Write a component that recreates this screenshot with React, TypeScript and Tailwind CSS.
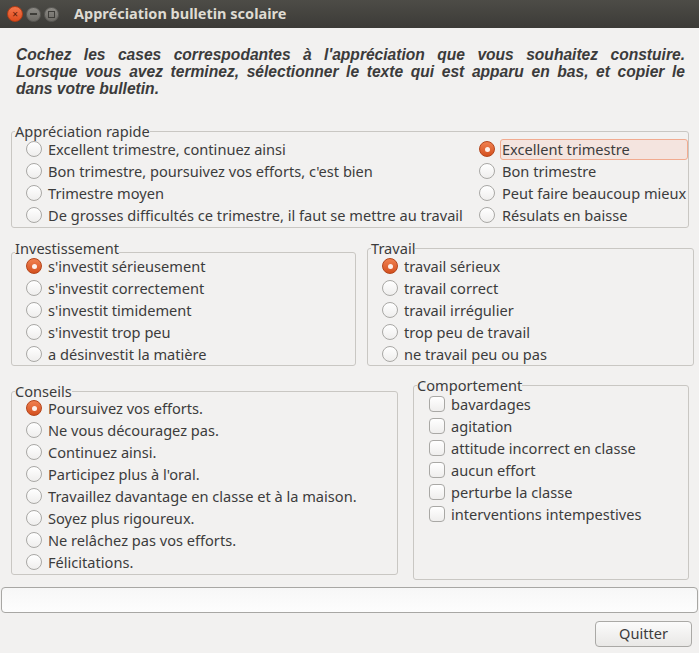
import React from "react";

const ui = "font-['Noto_Sans','Lato',sans-serif] text-[14.6px] text-[#3c3c3c]";

function Radio({ checked }: { checked?: boolean }) {
  if (checked) {
    return (
      <span className="flex h-[16px] w-[16px] shrink-0 items-center justify-center rounded-full border border-[#b4441a] bg-linear-to-b from-[#f0804f] to-[#d4501d]">
        <span className="h-[5px] w-[5px] rounded-full bg-[#fdf1ec]" />
      </span>
    );
  }
  return (
    <span className="h-[16px] w-[16px] shrink-0 rounded-full border border-[#a9a8a5] bg-linear-to-b from-[#ffffff] to-[#efeeed]" />
  );
}

function RadioRow({ label, checked }: { label: string; checked?: boolean }) {
  return (
    <div className="flex h-[22px] items-center gap-[6px] whitespace-nowrap">
      <Radio checked={checked} />
      <span className="leading-[16px]">{label}</span>
    </div>
  );
}

function CheckRow({ label }: { label: string }) {
  return (
    <div className="flex h-[22px] items-center gap-[6px] whitespace-nowrap">
      <span className="h-[16px] w-[16px] shrink-0 rounded-[4px] border border-[#a9a8a5] bg-linear-to-b from-[#ffffff] to-[#efeeed]" />
      <span className="leading-[16px]">{label}</span>
    </div>
  );
}

function GroupBox({
  title,
  className,
  titleClassName,
  children,
}: {
  title: string;
  className?: string;
  titleClassName?: string;
  children: React.ReactNode;
}) {
  return (
    <div className={"shrink-0 rounded-[3px] border border-[#c9c7c3] " + (className ?? "")}>
      <div className={"ml-[3px] w-fit bg-[#f2f1f0] leading-[12px] " + (titleClassName ?? "-mt-[7px]")}>
        {title}
      </div>
      {children}
    </div>
  );
}

export default function App() {
  const rapideLeft = [
    "Excellent trimestre, continuez ainsi",
    "Bon trimestre, poursuivez vos efforts, c'est bien",
    "Trimestre moyen",
    "De grosses difficultés ce trimestre, il faut se mettre au travail",
  ];
  const rapideRight = [
    "Excellent trimestre",
    "Bon trimestre",
    "Peut faire beaucoup mieux",
    "Résulats en baisse",
  ];
  const investissement = [
    "s'investit sérieusement",
    "s'investit correctement",
    "s'investit timidement",
    "s'investit trop peu",
    "a désinvestit la matière",
  ];
  const travail = [
    "travail sérieux",
    "travail correct",
    "travail irrégulier",
    "trop peu de travail",
    "ne travail peu ou pas",
  ];
  const conseils = [
    "Poursuivez vos efforts.",
    "Ne vous découragez pas.",
    "Continuez ainsi.",
    "Participez plus à l'oral.",
    "Travaillez davantage en classe et à la maison.",
    "Soyez plus rigoureux.",
    "Ne relâchez pas vos efforts.",
    "Félicitations.",
  ];
  const comportement = [
    "bavardages",
    "agitation",
    "attitude incorrect en classe",
    "aucun effort",
    "perturbe la classe",
    "interventions intempestives",
  ];

  return (
    <div className="flex h-[653px] w-[699px] flex-col overflow-hidden bg-[#f2f1f0]">
      {/* Title bar */}
      <div className="flex h-[28px] shrink-0 items-center bg-linear-to-b from-[#4d4c47] to-[#3c3b37] pl-[7px]">
        <span className="flex h-[16px] w-[16px] items-center justify-center rounded-full border border-[#b33d16] bg-linear-to-b from-[#f4764a] to-[#df4c1c] text-[10px] leading-none text-[#5b1c08]">
          ×
        </span>
        <span className="ml-[3px] flex h-[15px] w-[15px] items-center justify-center rounded-full border border-[#5c5b57] bg-linear-to-b from-[#8c8a85] to-[#6d6b66]">
          <span className="h-[2px] w-[7px] bg-[#3e3d39]" />
        </span>
        <span className="ml-[3px] flex h-[15px] w-[15px] items-center justify-center rounded-full border border-[#5c5b57] bg-linear-to-b from-[#8c8a85] to-[#6d6b66]">
          <span className="h-[7px] w-[7px] border-[1.5px] border-[#3e3d39]" />
        </span>
        <span className="ml-[15px] font-['Noto_Sans','Lato',sans-serif] text-[14.5px] font-bold text-[#dfdbd2]">
          Appréciation bulletin scolaire
        </span>
      </div>

      {/* Instructions */}
      <div className="mt-[18px] mr-[14px] ml-[16px] font-['Liberation_Sans',Arial,sans-serif] text-[15.6px] leading-[17px] font-bold text-[#3b3b3b] italic">
        <p className="text-justify [text-align-last:justify]">
          Cochez les cases correspodantes à l'appréciation que vous souhaitez constuire.
        </p>
        <p className="text-justify [text-align-last:justify]">
          Lorsque vous avez terminez, sélectionner le texte qui est apparu en bas, et copier le
        </p>
        <p>dans votre bulletin.</p>
      </div>

      <div className={"flex flex-col pl-[11px] " + ui}>
        {/* Appréciation rapide */}
        <GroupBox title="Appréciation rapide" className="mt-[34px] w-[678px]">
          <div className="mt-px grid grid-cols-[453px_1fr] pb-px pl-[14px]">
            <div className="flex flex-col">
              {rapideLeft.map((l) => (
                <RadioRow key={l} label={l} />
              ))}
            </div>
            <div className="flex flex-col">
              {rapideRight.map((l, i) => (
                <div key={l} className="flex h-[22px] items-center whitespace-nowrap">
                  <Radio checked={i === 0} />
                  <span
                    className={
                      "ml-[5px] flex h-[21px] flex-1 items-center rounded-[3px] border pl-px leading-[16px] " +
                      (i === 0 ? "border-[#f1ab90] bg-[#f4e4df]" : "border-transparent")
                    }
                  >
                    {l}
                  </span>
                </div>
              ))}
            </div>
          </div>
        </GroupBox>

        {/* Investissement / Travail */}
        <div className="mt-[20px] flex items-end gap-[11px]">
          <GroupBox title="Investissement" className="w-[345px]" titleClassName="-mt-[11px]">
            <div className="mt-px flex flex-col pl-[14px]">
              {investissement.map((l, i) => (
                <RadioRow key={l} label={l} checked={i === 0} />
              ))}
            </div>
          </GroupBox>
          <GroupBox title="Travail" className="w-[327px]">
            <div className="mt-px flex flex-col pl-[14px]">
              {travail.map((l, i) => (
                <RadioRow key={l} label={l} checked={i === 0} />
              ))}
            </div>
          </GroupBox>
        </div>

        {/* Conseils / Comportement */}
        <div className="mt-[19px] flex items-start gap-[15px]">
          <GroupBox title="Conseils" className="mt-[6px] w-[387px]">
            <div className="flex flex-col pb-px pl-[14px]">
              {conseils.map((l, i) => (
                <RadioRow key={l} label={l} checked={i === 0} />
              ))}
            </div>
          </GroupBox>
          <GroupBox title="Comportement" className="h-[195px] w-[276px]">
            <div className="mt-[2px] flex flex-col pl-[15px]">
              {comportement.map((l) => (
                <CheckRow key={l} label={l} />
              ))}
            </div>
          </GroupBox>
        </div>
      </div>

      {/* Result text field */}
      <input
        type="text"
        className={"mx-px mt-[7px] h-[26px] w-[697px] rounded-[4px] border border-[#a8a7a4] bg-linear-to-b from-[#f7f7f7] to-[#fdfdfd] px-[6px] outline-none " + ui}
      />

      {/* Button */}
      <div className="mt-[8px] flex justify-end pr-[7px]">
        <button
          type="button"
          className={"h-[26px] w-[97px] rounded-[4px] border border-[#aaa9a6] bg-linear-to-b from-[#fbfbfb] to-[#e9e8e6] " + ui}
        >
          Quitter
        </button>
      </div>
    </div>
  );
}
